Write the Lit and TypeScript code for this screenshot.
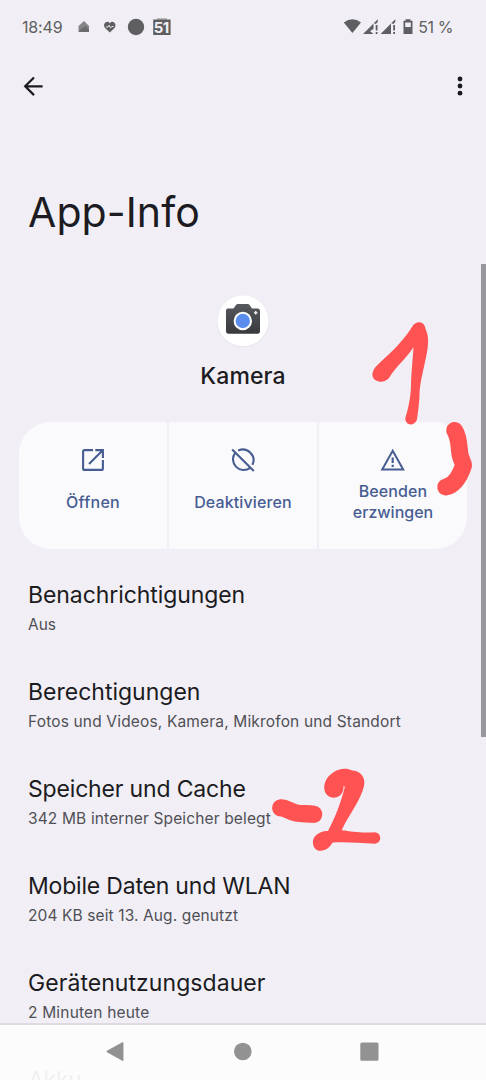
import { LitElement, html, css, svg } from "lit";
import { customElement, property } from "lit/decorators.js";
import { styleMap } from "lit/directives/style-map.js";

const openIcon = svg`<g fill="none" stroke="currentColor" stroke-width="2.1"><path d="M14 4.1H5.6Q4.1 4.1 4.1 5.6V22.4Q4.1 23.9 5.6 23.9H22.4Q23.9 23.9 23.9 22.4V14M16.3 4.1H23.9V12M23.5 4.5L10 18"/></g>`;
const disableIcon = svg`<g fill="none" stroke="currentColor" stroke-width="2.1"><path d="M9.1 4.6A10.7 10.7 0 0 1 23.4 18.9M21.2 21.8A10.7 10.7 0 0 1 6.2 6.8M3.2 3.4L24.8 25"/></g>`;
const warnIcon = svg`<path fill="none" stroke="currentColor" stroke-width="2" d="M13.7 4.8L24.2 23.6H3.2Z"/><path fill="currentColor" d="M12.6 11.4h2.2v5.6h-2.2zM12.6 18.8h2.2v2.2h-2.2z"/>`;

interface Tracked { text: string; track: number; }
const tracking = (t: Tracked) => styleMap({ letterSpacing: `${t.track}px` });

const entries: { title: Tracked; sub: Tracked }[] = [
  { title: { text: "Benachrichtigungen", track: -0.08 }, sub: { text: "Aus", track: 0 } },
  { title: { text: "Berechtigungen", track: 0 }, sub: { text: "Fotos und Videos, Kamera, Mikrofon und Standort", track: 0.16 } },
  { title: { text: "Speicher und Cache", track: -0.17 }, sub: { text: "342 MB interner Speicher belegt", track: 0.14 } },
  { title: { text: "Mobile Daten und WLAN", track: -0.2 }, sub: { text: "204 KB seit 13. Aug. genutzt", track: 0.11 } },
  { title: { text: "Gerätenutzungsdauer", track: 0.06 }, sub: { text: "2 Minuten heute", track: 0.18 } },
  { title: { text: "Akku", track: -0.3 }, sub: { text: "", track: 0 } },
];

@customElement("app-action")
class AppAction extends LitElement {
  @property({ attribute: false }) icon: unknown = null;
  @property({ attribute: false }) lines: Tracked[] = [];
  static styles = css`
    :host { display: flex; flex-direction: column; align-items: center; padding-top: 24px; background: #fafafd; color: #475d92; }
    svg { width: 28px; height: 28px; display: block; }
    .label { height: 42px; margin-top: 7px; display: flex; flex-direction: column; justify-content: center; align-items: center; font-size: 16px; line-height: 21px; font-weight: 500; white-space: nowrap; }
  `;
  render() {
    return html`<svg viewBox="0 0 28 28">${this.icon}</svg>
      <div class="label">${this.lines.map((l) => html`<span style=${tracking(l)}>${l.text}</span>`)}</div>`;
  }
}

@customElement("app-entry")
class AppEntry extends LitElement {
  @property({ attribute: false }) heading!: Tracked;
  @property({ attribute: false }) sub!: Tracked;
  static styles = css`
    :host { display: block; height: 97.2px; box-sizing: border-box; padding: 18px 28px 0; white-space: nowrap; }
    .heading { font-size: 23px; line-height: 28px; color: #1b1b21; }
    .sub { margin-top: 5px; font-size: 15.5px; line-height: 22px; color: #504f56; }
  `;
  render() {
    return html`<div class="heading" style=${tracking(this.heading)}>${this.heading.text}</div>
      <div class="sub" style=${tracking(this.sub)}>${this.sub.text}</div>`;
  }
}

@customElement("app-root")
class AppRoot extends LitElement {
  static styles = css`
    :host { display: block; position: relative; width: 486px; height: 1080px; overflow: hidden; background: #f1eff5; color: #1b1b21; font-family: Inter, Roboto, sans-serif; }
    svg { display: block; }
    .status { height: 54px; box-sizing: border-box; padding: 0 33px 0 22px; display: flex; align-items: center; justify-content: space-between; font-size: 16px; line-height: 20px; color: #5f5f61; }
    .group { display: flex; align-items: center; }
    .time { width: 44px; letter-spacing: -0.15px; }
    .percent { letter-spacing: -0.45px; }
    .toolbar { height: 64px; box-sizing: border-box; padding: 0 15px 0 21px; display: flex; align-items: center; justify-content: space-between; }
    .title { margin: 69px 28px 0; font-size: 41px; line-height: 50px; font-weight: 400; letter-spacing: 0.1px; }
    .app { display: flex; flex-direction: column; align-items: center; padding-top: 57px; }
    .name { margin-top: 13px; font-size: 23px; line-height: 30px; font-weight: 500; letter-spacing: 0.15px; }
    .card { display: grid; grid-template-columns: repeat(3, 1fr); gap: 2px; margin: 31px 19px 13.5px; height: 127px; border-radius: 32px; overflow: hidden; }
    .nav { position: absolute; left: 0; right: 0; bottom: 0; height: 57px; box-sizing: border-box; border-top: 2px solid #dfdbe0; background: rgba(252, 252, 252, 0.95); }
    .nav svg { width: 486px; height: 55px; }
    .thumb { position: absolute; right: 0; top: 264px; width: 5px; height: 473px; background: #97979c; }
    .ink { position: absolute; inset: 0; width: 486px; height: 1080px; }
  `;
  render() {
    return html`
      <div class="status">
        <div class="group">
          <span class="time">18:49</span>
          <svg width="110" height="22" viewBox="66 16 110 22">
            <path fill="#858587" d="M78.5 26L84 21L89 26V32H78.5Z"/>
            <path fill="#6b6b6d" d="M81 29L85.5 26L89 29.5V32H78.5Z"/>
            <path fill="#5f5f61" d="M109.8 32.4L105.3 28.2C102.5 25 105 21.8 107.4 21.8C108.6 21.8 109.3 22.5 109.8 23.2C110.3 22.5 111 21.8 112.2 21.8C114.6 21.8 117.1 25 114.3 28.2Z"/>
            <path fill="none" stroke="#f1eff5" stroke-width="0.9" d="M106 27H108L109.2 25.2L110.6 28L111.8 26.5H113.6"/>
            <circle cx="136" cy="27" r="8.2" fill="#5f5f61"/>
            <path fill="#bbbabd" d="M157 18H167V20H157Z"/>
            <rect x="153.2" y="19.5" width="17.4" height="15.5" fill="#5f5f61"/>
            <text x="161.3" y="32.9" text-anchor="middle" font-size="15" font-weight="700" letter-spacing="-0.6" fill="#f1eff5">51</text>
          </svg>
        </div>
        <div class="group">
          <svg width="75" height="22" viewBox="344 16 75 22" fill="#5f5f61">
            <path d="M344.8 22.4Q353.4 16.2 362 22.4L353.4 33Z"/>
            <path d="M364 34L374.5 23.5V29L371 31L374.5 34ZM374.8 23.2L378.8 19.2V22L376.8 24Z"/>
            <path d="M376.7 25H378.5V30.5H376.7ZM376.7 32H378.5V34H376.7Z"/>
            <path d="M381.6 34L392 23.5V34ZM392.3 23.2L396.3 19.2V22L394.3 24Z"/>
            <path d="M394.2 25H396V30.5H394.2ZM394.2 32H396V34H394.2Z"/>
            <path fill-rule="evenodd" d="M406.5 19.2H411.5V20.8H413.5V34H404.5V20.8H406.5ZM406.2 22.4V27H411.8V22.4Z"/>
          </svg>
          <span class="percent">51 %</span>
        </div>
      </div>
      <div class="toolbar">
        <svg width="24" height="24" viewBox="0 0 24 24" fill="none" stroke="#1b1b1f" stroke-width="2.2"><path d="M21.6 12.3H4.2M13 3.5L4.2 12.3L13 21.1"/></svg>
        <svg width="22" height="24" viewBox="0 0 22 24" fill="#1b1b1f"><circle cx="11" cy="5" r="2.4"/><circle cx="11" cy="12" r="2.4"/><circle cx="11" cy="19.2" r="2.4"/></svg>
      </div>
      <h1 class="title">App-Info</h1>
      <div class="app">
        <svg width="54" height="54" viewBox="0 0 54 54">
          <defs><linearGradient id="body" x1="0" y1="0" x2="0" y2="1"><stop offset="0" stop-color="#56595d"/><stop offset="1" stop-color="#37393d"/></linearGradient></defs>
          <circle cx="27" cy="27" r="26.3" fill="#e7e5eb"/>
          <circle cx="27" cy="26.8" r="25.5" fill="#fff"/>
          <path fill="url(#body)" d="M12 14.5H17.5L20 11Q20.6 10 22 10H31.5Q33 10 33.6 11L36 14.5H41.5Q44 14.5 44 17V37Q44 39.8 41.5 39.8H12.5Q10 39.8 10 37V16.5Q10 14.5 12 14.5Z"/>
          <circle cx="26.8" cy="27" r="9.2" fill="#fff"/>
          <circle cx="26.8" cy="27" r="7.2" fill="#5b8def"/>
          <path stroke="#e6e7e8" stroke-width="1.5" d="M39.7 17V20.4M38 18.7H41.4"/>
        </svg>
        <div class="name">Kamera</div>
      </div>
      <div class="card">
        <app-action .icon=${openIcon} .lines=${[{ text: "Öffnen", track: 0.25 }]}></app-action>
        <app-action .icon=${disableIcon} .lines=${[{ text: "Deaktivieren", track: 0.13 }]}></app-action>
        <app-action .icon=${warnIcon} .lines=${[{ text: "Beenden", track: 0.1 }, { text: "erzwingen", track: 0 }]}></app-action>
      </div>
      ${entries.map((e) => html`<app-entry .heading=${e.title} .sub=${e.sub}></app-entry>`)}
      <div class="thumb"></div>
      <div class="nav">
        <svg viewBox="0 1025 486 55" fill="#929292">
          <path stroke="#929292" stroke-width="1.5" stroke-linejoin="round" d="M107.3 1051.5L122.7 1043V1060.2Z"/>
          <circle cx="242.8" cy="1051.5" r="8.8"/>
          <rect x="360.3" y="1042.5" width="18.2" height="18.2" rx="1.5"/>
        </svg>
      </div>
      <svg class="ink" viewBox="0 0 486 1080" fill="#ff5252">
        <path d="M375.5 367C384 358 401 345 412 327C416 319.5 425 321.5 425.5 329C428.5 335 428.5 342 427.5 349C423.5 372 420 380 419.5 396C419 406 418 412 417 419.5C414 427 405 425.5 405.3 418C408 410 411 396 411 385C411.2 372 413 358 413.5 347C407 358 396 366 389 378C382 385.5 369 380.5 373.2 371Q374 369 375.5 367Z"/>
        <path fill="none" stroke="#ff5252" stroke-width="17" stroke-linecap="round" stroke-linejoin="round" d="M454.7 430.5C459.5 438 458.5 446 460 454.5C461 460 463.5 462 463.5 465.5C461 473 456 485 445.7 487"/>
        <path fill="none" stroke="#ff5252" stroke-width="17.3" stroke-linecap="round" d="M280.7 807.9C286 807.5 290 812 296 813C302 814 308 813.5 313.7 814.3"/>
        <path d="M328 831C334 820 341 803 344.8 787L343.6 785.5C344 794 339 797.7 333.5 797.7C326 797.5 322.5 790 325 782.5C329 771 344 765.5 352 770.5C360 770.5 366 777 364 786C361 800 348 816 341.7 830.3C352 831.5 360 833.3 375 832.3C382 833 382 843 375 843.8C360 843 345 841.5 332.7 842.5C330 846 328 850 321 850.8C313 851 310.5 841 315.5 835.7C319 832 324 830.6 328 831Z"/>
      </svg>`;
  }
}
